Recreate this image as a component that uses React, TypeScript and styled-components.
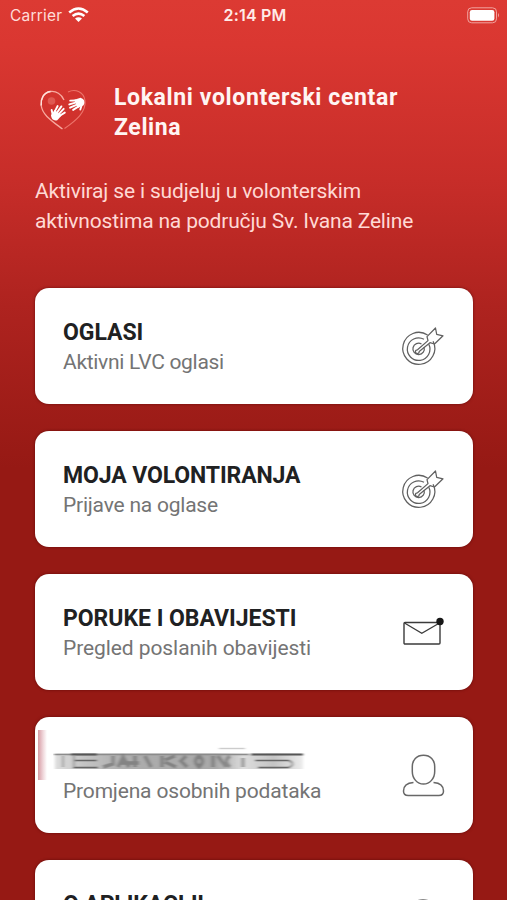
import React from 'react';
import styled, { createGlobalStyle } from 'styled-components';

const GlobalStyle = createGlobalStyle`
  * { box-sizing: border-box; }
  html, body { margin: 0; height: 900px; overflow: hidden; }
  body { font-family: Roboto, sans-serif; background: #961914; }
`;

const Screen = styled.div`
  width: 507px;
  height: 900px;
  overflow: hidden;
  display: flex;
  flex-direction: column;
  background: linear-gradient(180deg, #dc3a33 0%, #da3731 5%, #c72d29 20%, #ae231f 34%, #961914 52%, #961914 100%);
`;

const StatusBar = styled.header`
  height: 30px;
  flex: none;
  display: grid;
  grid-template-columns: 1fr auto 1fr;
  align-items: center;
  padding: 0 7px 0 10px;
  color: #fff;
  font-family: Inter, sans-serif;
  font-size: 15.5px;
`;

const Carrier = styled.div`
  display: flex;
  align-items: center;
  gap: 6px;
  color: #ffdcd8;
  letter-spacing: 0.2px;
`;

const Clock = styled.div`
  font-weight: 600;
  font-size: 16px;
  color: #ffebe8;
  letter-spacing: 0.2px;
`;

const Battery = styled.svg`
  justify-self: end;
`;

const Brand = styled.div`
  display: flex;
  align-items: flex-start;
  gap: 26px;
  margin: 53px 35px 0;
`;

const Logo = styled.svg`
  flex: none;
`;

const Title = styled.h1`
  margin: 0;
  font-size: 23px;
  font-weight: 700;
  line-height: 30px;
  color: #fff5f3;
  letter-spacing: 0.63px;
  white-space: nowrap;
`;

const Intro = styled.p`
  margin: 33px 35px 0;
  font-size: 21px;
  line-height: 30px;
  color: #ffd9d5;
  letter-spacing: -0.17px;
  white-space: nowrap;
`;

const Menu = styled.main`
  display: flex;
  flex-direction: column;
  gap: 27px;
  padding: 52px 34px 0 35px;
`;

const Card = styled.section`
  height: 116px;
  flex: none;
  display: flex;
  align-items: center;
  justify-content: space-between;
  padding: 2px 29px 0 28px;
  border-radius: 14px;
  background: #fff;
  box-shadow: 0 0 3px rgba(70, 0, 0, 0.65);
  position: relative;
`;

const Labels = styled.div`
  display: flex;
  flex-direction: column;
  white-space: nowrap;
`;

const Heading = styled.h2<{ $spacing: number }>`
  margin: 0;
  height: 30px;
  font-size: 23px;
  line-height: 31px;
  font-weight: 700;
  color: #202122;
  letter-spacing: ${(p) => p.$spacing}px;
`;

const Caption = styled.div<{ $spacing: number }>`
  min-height: 30px;
  font-size: 21px;
  line-height: 30px;
  color: #747474;
  letter-spacing: ${(p) => p.$spacing}px;
`;

const Smudge = styled.svg`
  display: block;
  height: 30px;
  margin-left: -10px;
`;

const EdgeMark = styled.span`
  position: absolute;
  left: 3px;
  top: 13px;
  width: 9px;
  height: 50px;
  background: linear-gradient(90deg, #d69ba4, #efd5d9 55%, #fff);
`;

const Icon = styled.svg`
  flex: none;
  overflow: visible;
`;

const Target = () => (
  <Icon width="42" height="40" viewBox="0 0 42 40" fill="none" stroke="#606060" strokeWidth="1.25" strokeLinejoin="round">
    <path d="M25.6 8A16 16 0 1 0 31.1 14.2" />
    <path d="M22 12.2A11.3 11.3 0 1 0 26.8 17.2" />
    <path d="M19.5 17A5.7 5.7 0 1 0 22 20.1" />
    <path d="M15.500 22.800 26 13.600 25 9.600 33.500 1 34.700 7.300 41 8.800 32.500 17 28 15.700 17.200 24.600A1.900 1.900 0 1 1 15.500 22.800Z" />
  </Icon>
);

const Envelope = () => (
  <Icon width="42" height="40" viewBox="0 0 42 40" fill="none" stroke="#3b3b3b">
    <rect x="2" y="9.500" width="36" height="21.500" rx="1" strokeWidth="1.400" />
    <path d="M2.500 10 19.800 20.300 37.500 10" strokeWidth="1.300" />
    <circle cx="38" cy="8.500" r="3.700" fill="#171717" stroke="none" />
  </Icon>
);

const Person = () => (
  <Icon width="42" height="42" viewBox="0 0 42 42" fill="none" stroke="#686868" strokeWidth="1.500">
    <path d="M21.500.2C14.500.2 10.300 5 10.300 11.500v5c0 7 4.800 12.500 11.200 12.500S32.700 23.500 32.700 16.500V11.500C32.700 5 28.500.2 21.500.2Z" />
    <path d="M11.500 27.500C4.500 28 1.500 31 1.500 36 1.500 39.100 3.300 40.500 6.200 40.500H36.800C39.700 40.500 41.500 39.100 41.500 36 41.500 31 38.500 28 31.500 27.500" />
  </Icon>
);

const Info = () => (
  <Icon width="42" height="40" viewBox="0 0 42 40" fill="none" stroke="#606060" strokeWidth="1.400">
    <circle cx="21" cy="20" r="19" />
    <path d="M21 17v13M21 10v3" />
  </Icon>
);

const Hand = ({ transform }: { transform: string }) => (
  <g transform={transform} stroke="#fff" strokeLinecap="round" fill="#fff">
    <path d="M-4.500-1 4.500-1 4 5.500Q0 10-4 5.500Z" stroke="none" />
    <path d="M-3.400 0-4.500-6M-1-1-1.300-8M1.400-1 2-7.500M3.300 0 5.200-5.200M-3 4-6.800.8" strokeWidth="1.900" />
  </g>
);

const HeartLogo = () => (
  <Logo width="53" height="50" viewBox="0 0 53 50" fill="none">
    <path d="M29 17C26.500 11 21 7.800 15.500 8.500 8.500 9.500 5.500 16 6.200 22.500 7.300 32 17 38 27.500 46" stroke="#f7aaa0" strokeWidth="1.300" />
    <path d="M33 9C40 5.500 48.500 8.500 50 17.500 51.500 29 41 37.500 29.500 45.500" stroke="#ec746b" strokeWidth="1.100" />
    <path d="M6.200 22.500C5.500 16 8.500 9.500 15.500 8.500" stroke="#ffe1dc" strokeWidth="1.500" />
    <circle cx="16.500" cy="18" r="3.800" fill="#e66f66" opacity=".65" />
    <Hand transform="translate(22.500 30.500) rotate(38)" />
    <Hand transform="translate(42 20.500) rotate(-112)" />
  </Logo>
);

const RedactedName = () => (
  <Smudge width="256" viewBox="0 0 256 30" fill="none">
    <defs>
      <filter id="soft" x="-5%" y="-30%" width="110%" height="160%">
        <feGaussianBlur stdDeviation="1.8 .6" />
      </filter>
      <linearGradient id="smear">
        <stop offset="0" stopColor="#ddd" />
        <stop offset=".12" stopColor="#c4c4c4" />
        <stop offset=".28" stopColor="#adadad" />
        <stop offset=".65" stopColor="#a8a8a8" />
        <stop offset=".76" stopColor="#ddd" />
        <stop offset=".88" stopColor="#c4c4c4" />
        <stop offset="1" stopColor="#ececec" />
      </linearGradient>
    </defs>
    <g filter="url(#soft)">
      <path d="M2 7.500H250V23H2Z" fill="url(#smear)" />
      <path d="M1 8.500H196" stroke="#8b8b8b" strokeWidth="1.500" />
      <path d="M18 8.500H44M198 8.500H250" stroke="#555" strokeWidth="1.800" />
      <path d="M20 14.500H44M20 21.500H45M202 14.500H236M205 21.500H236" stroke="#666" strokeWidth="1.600" />
      <path d="M236 14.500Q243 18 236 21.500" stroke="#999" strokeWidth="2" />
      <path d="M10 10V21M21 9V21" stroke="#999" strokeWidth="2" />
      <path d="M60 10V18L50 21M65 21 70 11 76 21M66 17H86M82 10V21M92 10 98 21M109 10V21M112 14 122 10M112 16 123 21M133 10 128 15 134 21M146 10Q139 15 146 21Q153 15 146 10M160 10V21M165 10 173 21M177 10Q170 15 177 21M190 12V21" stroke="#606060" strokeWidth="3.500" opacity=".55" />
      <path d="M166 2.500H192" stroke="#ccc" strokeWidth="1.400" />
    </g>
  </Smudge>
);

const App = () => (
  <>
    <GlobalStyle />
    <Screen>
      <StatusBar>
        <Carrier>
          <span>Carrier</span>
          <svg width="21" height="16" viewBox="0 0 21 16" fill="none" stroke="#fff" strokeWidth="2.600">
            <path d="M1.200 5.400Q10.500-2.400 19.800 5.400M4.600 9Q10.500 4.200 16.400 9" />
            <path d="M7 11.600Q10.500 8.900 14 11.600L10.500 15Z" fill="#fff" stroke="none" />
          </svg>
        </Carrier>
        <Clock>2:14 PM</Clock>
        <Battery width="33" height="17" viewBox="0 0 33 17" fill="none">
          <rect x=".7" y=".8" width="28.800" height="15" rx="4" stroke="#f1a39e" />
          <rect x="2.800" y="3" width="24.600" height="10.700" rx="2.200" fill="#fff" />
          <path d="M31 6Q33 8.200 31 10.500Z" fill="#f1a39e" />
        </Battery>
      </StatusBar>
      <Brand>
        <HeartLogo />
        <Title>Lokalni volonterski centar<br />Zelina</Title>
      </Brand>
      <Intro>Aktiviraj se i sudjeluj u volonterskim<br />aktivnostima na području Sv. Ivana Zeline</Intro>
      <Menu>
        <Card>
          <Labels><Heading $spacing={-0.05}>OGLASI</Heading><Caption $spacing={-0.3}>Aktivni LVC oglasi</Caption></Labels>
          <Target />
        </Card>
        <Card>
          <Labels><Heading $spacing={-0.12}>MOJA VOLONTIRANJA</Heading><Caption $spacing={-0.22}>Prijave na oglase</Caption></Labels>
          <Target />
        </Card>
        <Card>
          <Labels><Heading $spacing={-0.03}>PORUKE I OBAVIJESTI</Heading><Caption $spacing={-0.08}>Pregled poslanih obavijesti</Caption></Labels>
          <Envelope />
        </Card>
        <Card>
          <EdgeMark />
          <Labels><RedactedName /><Caption $spacing={-0.17}>Promjena osobnih podataka</Caption></Labels>
          <Person />
        </Card>
        <Card>
          <Labels><Heading $spacing={-0.12}>O APLIKACIJI</Heading><Caption $spacing={0} /></Labels>
          <Info />
        </Card>
      </Menu>
    </Screen>
  </>
);

export default App;
